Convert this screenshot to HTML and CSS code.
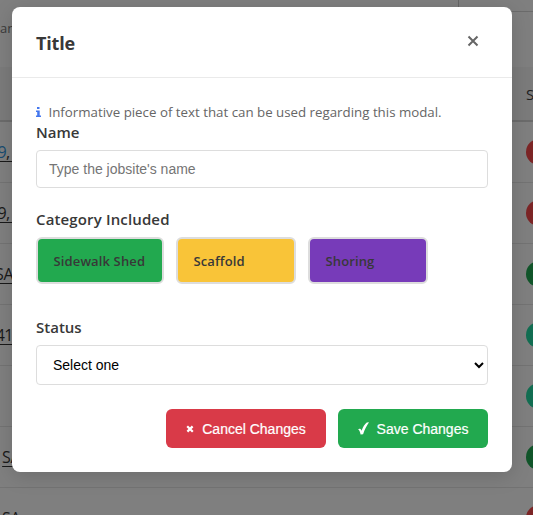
FILE: index.html
```html
<!DOCTYPE html>
<html lang="en">
<head>
<meta charset="utf-8">
<title>Jobsites</title>
<link rel="stylesheet" href="styles.css">
</head>
<body>
<div class="page" aria-hidden="true">
  <div class="toolbar"><span class="toolbar-label">an</span><div class="toolbar-panel"></div></div>
  <div class="table-head"><span class="status-head">S</span></div>
  <div class="row"><span class="address number"><b class="blue">9</b>, &nbsp;</span><i class="dot red"></i></div>
  <div class="row"><span class="address number">9, &nbsp;</span><i class="dot red"></i></div>
  <div class="row"><span class="address">SA</span><i class="dot green"></i></div>
  <div class="row"><span class="address">41</span><i class="dot teal"></i></div>
  <div class="row"><span class="address"></span><i class="dot teal"></i></div>
  <div class="row"><span class="address wide">SA</span><i class="dot green"></i></div>
  <div class="row"><span class="address wide">SA</span><i class="dot red"></i></div>
</div>
<section class="modal" role="dialog" aria-labelledby="title">
  <header class="modal-header">
    <h1 id="title">Title</h1>
    <button class="close" aria-label="Close"><svg width="12" height="12" viewBox="0 0 12 12"><path d="M1.5 1.5l9 9M10.5 1.5l-9 9"/></svg></button>
  </header>
  <div class="modal-body">
    <p class="info"><svg width="5" height="10" viewBox="0 0 5 10"><path d="M1 0h2.500v2H1zM0 3.500h3.700v5H5V10H0V8.500h1.200V5H0z"/></svg><span>Informative piece of text that can be used regarding this modal.</span></p>
    <label class="label" for="name">Name</label>
    <input id="name" class="input" type="text" placeholder="Type the jobsite's name">
    <div class="label label-category">Category Included</div>
    <div class="categories">
      <div class="category shed">Sidewalk Shed</div>
      <div class="category scaffold">Scaffold</div>
      <div class="category shoring">Shoring</div>
    </div>
    <label class="label label-status" for="status">Status</label>
    <select id="status" class="select"><option>Select one</option></select>
    <footer class="actions">
      <button class="button cancel"><svg width="8" height="8" viewBox="0 0 8 8"><path d="M1.200 1.200l5.600 5.600M6.600 1.400L1.400 6.600"/></svg><span>Cancel Changes</span></button>
      <button class="button save"><svg width="11" height="13" viewBox="0 0 11 13"><path d="M0 7.300C1.600 6.200 2.800 6.700 3.600 8.700 5 5 6.600 2.200 8.800.500L11 .300C8.600 3.700 6.700 7.500 5.100 12.200L2.600 12.600C2.100 10 1.400 8.200 0 7.300z"/></svg><span>Save Changes</span></button>
    </footer>
  </div>
</section>
</body>
</html>
```
FILE: styles.css
```css
* { box-sizing: border-box; }
body {
  margin: 0;
  width: 533px;
  height: 515px;
  overflow: hidden;
  position: relative;
  background: #7f7f7f;
  color: #383838;
  font-family: "Open Sans", "Noto Sans", sans-serif;
}
.page { height: 515px; overflow: hidden; }
.toolbar { height: 67px; display: flex; justify-content: space-between; }
.toolbar-label { margin: 19px 0 0; font-size: 13px; line-height: 18px; color: #3b3b3b; }
.toolbar-panel { width: 75px; height: 12px; border-left: 1px solid #666; border-bottom: 1px solid #6b6b6b; }
.table-head {
  height: 55px;
  display: flex;
  align-items: center;
  background: #7b7b7b;
  border-bottom: 2px solid #6b6b6b;
}
.status-head { margin-left: 526px; font-size: 15px; font-weight: 500; color: #202020; }
.row {
  height: 61px;
  display: flex;
  align-items: center;
  justify-content: space-between;
  border-bottom: 1px solid #737373;
}
.address {
  width: 13px;
  display: flex;
  justify-content: flex-end;
  white-space: nowrap;
  color: #191919;
  font-size: 16px;
  line-height: 20px;
  letter-spacing: -.5px;
  text-decoration: underline;
  text-underline-offset: 3px;
}
.number { width: 17px; }
.blue { color: #174b70; font-weight: 400; }
.wide { width: 20px; }
.dot { width: 26px; height: 26px; margin-right: -19px; border-radius: 50%; }
.red { background: #7c2526; }
.green { background: #11552a; }
.teal { background: #126e52; }
.modal {
  position: absolute;
  left: 12px;
  top: 7px;
  width: 500px;
  height: 465px;
  background: #fff;
  border-radius: 8px;
  box-shadow: 0 4px 20px rgba(0, 0, 0, .15);
}
.modal-header {
  height: 71px;
  padding: 0 24px;
  display: flex;
  align-items: center;
  justify-content: space-between;
  border-bottom: 1px solid #eaeaea;
}
h1 { margin: 1px 0 0; font-size: 18px; line-height: 24px; font-weight: 700; letter-spacing: -.15px; }
.close { width: 30px; height: 30px; margin-bottom: 3px; padding: 0; border: 0; background: none; display: flex; align-items: center; justify-content: center; }
.close svg { fill: none; stroke: #666; stroke-width: 2; }
.modal-body { padding: 24px; }
.info { height: 20px; margin: 0; display: flex; align-items: center; gap: 7.500px; font-size: 13.300px; line-height: 20px; color: #666; white-space: nowrap; }
.info svg { fill: #4477ee; }
.label { display: block; height: 20px; font-size: 15px; font-weight: 600; line-height: 20px; white-space: nowrap; }
.input, .select {
  display: block;
  width: 100%;
  border: 1px solid #ddd;
  border-radius: 4px;
  background: #fff;
  font: 14px "Liberation Sans", Arial, sans-serif;
}
.input { height: 38px; margin-top: 8px; padding: 0 12px; }
.input::placeholder { color: #757575; }
.label-category { margin-top: 21px; letter-spacing: .14px; }
.categories { display: flex; gap: 12px; margin-top: 8px; }
.category {
  width: 120px;
  height: 47px;
  padding: 0 15.500px;
  display: flex;
  align-items: center;
  border: 2px solid #ddd;
  border-radius: 6px;
  font-size: 13px;
  font-weight: 600;
  letter-spacing: .13px;
  white-space: nowrap;
}
.shed { width: 128px; background: #22a94f; }
.scaffold { background: #f9c438; }
.shoring { background: #773bb9; }
.label-status { margin-top: 33px; }
.select { height: 40px; margin-top: 8px; padding: 0 0 0 12px; color: #000; }
.actions { display: flex; justify-content: flex-end; gap: 12px; margin-top: 24px; }
.button {
  height: 39px;
  padding: 0;
  display: flex;
  align-items: center;
  justify-content: center;
  gap: 8px;
  border: 0;
  border-radius: 6px;
  color: #fff;
  font: 14px "Liberation Sans", Arial, sans-serif;
  -webkit-text-stroke: .2px #fff;
}
.cancel { width: 160px; background: #d93a48; }
.cancel svg { fill: none; stroke: #fff; stroke-width: 2.200; }
.save { width: 150px; background: #22a94f; }
.save svg { fill: #fff; }
```
